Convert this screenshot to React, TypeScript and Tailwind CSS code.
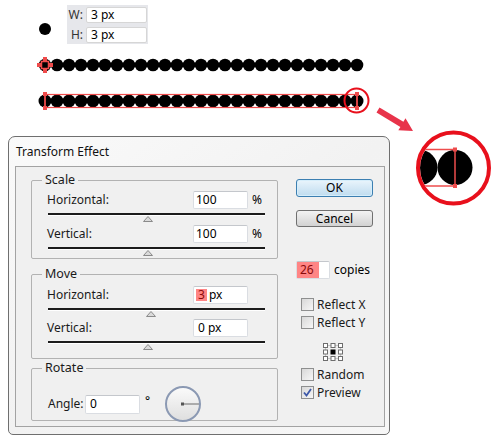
import type React from "react"

const DOTS = Array.from({ length: 27 }, (_, i) => 45 + i * 12)

function SizeField({ label, value }: { label: string; value: string }) {
  return (
    <div className="flex items-center">
      <span className="w-[19px] pr-[3px] text-right text-[#333]">{label}</span>
      <div className="flex h-[16px] w-[61px] items-center rounded-[2px] border border-[#d6d6d6] bg-white pl-[4px]">
        {value}
      </div>
    </div>
  )
}

function DotRows() {
  return (
    <svg width="380" height="92" className="block">
      {DOTS.map((x) => (
        <circle key={"a" + x} cx={x} cy={21} r={6.3} fill="#000" />
      ))}
      {/* selection marker on first dot */}
      <rect x={41.5} y={17.5} width={7} height={7} fill="none" stroke="#ef4b4b" strokeWidth={1.5} />
      <rect x={37} y={19} width={4} height={4} fill="#ef4b4b" />
      <rect x={49} y={19} width={4} height={4} fill="#ef4b4b" />
      <rect x={43} y={13} width={4} height={4} fill="#ef4b4b" />
      <rect x={43} y={25} width={4} height={4} fill="#ef4b4b" />

      {DOTS.map((x) => (
        <circle key={"b" + x} cx={x} cy={57} r={6.5} fill="#000" />
      ))}
      <rect x={45} y={50.5} width={312} height={13} fill="none" stroke="#ef4b4b" strokeWidth={1.2} />
      <line x1={45} y1={50} x2={45} y2={64} stroke="#ef4b4b" strokeWidth={1.5} />
      <line x1={357} y1={50} x2={357} y2={64} stroke="#ef4b4b" strokeWidth={1.5} />
      <rect x={43} y={48} width={4} height={4} fill="#ef4b4b" />
      <rect x={43} y={62} width={4} height={4} fill="#ef4b4b" />
      <rect x={355} y={48} width={4} height={4} fill="#ef4b4b" />
      <rect x={355} y={62} width={4} height={4} fill="#ef4b4b" />
      <circle cx={356.5} cy={56.5} r={12} fill="none" stroke="#e8101c" strokeWidth={2} />
    </svg>
  )
}

function Callout() {
  return (
    <svg width="130" height="115" className="absolute left-[370px] top-[100px]">
      <defs>
        <clipPath id="inside">
          <circle cx={83.5} cy={68} r={33.5} />
        </clipPath>
      </defs>
      <polygon
        points="9.5,7.4 33.4,21.7 35.5,18.3 43,31 28.3,30.3 30.4,26.9 6.5,12.6"
        fill="#e8334a"
      />
      <g clipPath="url(#inside)">
        <circle cx={50} cy={67.5} r={17.5} fill="#000" />
        <circle cx={85} cy={67.5} r={17.5} fill="#000" />
        <line x1={40} y1={49.5} x2={85} y2={49.5} stroke="#ee4d4d" strokeWidth={1.3} />
        <line x1={40} y1={86} x2={85} y2={86} stroke="#ee4d4d" strokeWidth={1.3} />
      </g>
      <line x1={85} y1={49.5} x2={85} y2={86} stroke="#ee4d4d" strokeWidth={1.5} />
      <rect x={83} y={47.5} width={4} height={4} fill="#ee4d4d" />
      <rect x={83} y={84} width={4} height={4} fill="#ee4d4d" />
      <circle cx={83.5} cy={68} r={35.5} fill="none" stroke="#e8101c" strokeWidth={4} />
    </svg>
  )
}

function TextBox({ className, children }: { className: string; children: React.ReactNode }) {
  return (
    <div
      className={
        "flex items-center rounded-[2px] border border-[#dadde2] border-t-[#c4c7cc] bg-white " + className
      }
    >
      {children}
    </div>
  )
}

function ValueRow({ label, children, unit }: { label: string; children: React.ReactNode; unit?: string }) {
  return (
    <div className="flex h-[18px] items-center">
      <span className="w-[161px] pl-[15px] text-[#1a1a1a]">{label}</span>
      <TextBox className="h-[18px] w-[55px] pl-[2px]">{children}</TextBox>
      {unit && <span className="ml-[4px]">{unit}</span>}
    </div>
  )
}

function Slider({ thumb, gap }: { thumb: number; gap: string }) {
  return (
    <div className={"ml-[16px] w-[217px] pt-[4px] " + gap}>
      <div className="h-[2px] bg-[#1c1c1c] shadow-[0_1px_0_#ffffff]" />
      <svg width="10" height="6" className="mt-[1px] block" style={{ marginLeft: thumb - 5 }}>
        <polygon points="5,0.5 9.5,5.5 0.5,5.5" fill="#dadada" stroke="#8a8a8a" strokeWidth={1} />
      </svg>
    </div>
  )
}

function Group({ title, className, children }: { title: string; className: string; children: React.ReactNode }) {
  return (
    <fieldset className={"w-[247px] rounded-[2px] border border-[#b2b2b2] " + className}>
      <legend className="ml-[10px] px-[3px] text-[12.5px] leading-[16px] text-[#1a1a1a]">{title}</legend>
      {children}
    </fieldset>
  )
}

function Checkbox({ label, checked }: { label: string; checked?: boolean }) {
  return (
    <div className="flex items-center pl-[5px]">
      <div className="flex h-[13px] w-[13px] items-center justify-center border border-[#8e8f8f] bg-gradient-to-br from-[#d8d8d8] to-[#f7f7f7]">
        {checked && (
          <svg width="11" height="11">
            <path d="M2 5.5 L4.5 8.5 L9 2" fill="none" stroke="#3d58a8" strokeWidth={1.8} />
          </svg>
        )}
      </div>
      <span className="ml-[3px] leading-[13px] text-[#1a1a1a]">{label}</span>
    </div>
  )
}

function RefPoint() {
  const pts = [
    [0.5, 0.5],
    [8, 0.5],
    [15.5, 0.5],
    [0.5, 7],
    [15.5, 7],
    [0.5, 13.5],
    [8, 13.5],
    [15.5, 13.5],
  ]
  return (
    <svg width="20" height="18" className="ml-[27px] block">
      <rect x={2.5} y={2.5} width={15} height={13} fill="none" stroke="#9a9a9a" strokeWidth={1} strokeDasharray="1 1" />
      {pts.map(([x, y]) => (
        <rect key={x + "-" + y} x={x} y={y} width={4} height={4} fill="#fff" stroke="#6d6d6d" strokeWidth={1} />
      ))}
      <rect x={7.5} y={6.5} width={5} height={5} fill="#000" />
    </svg>
  )
}

function Dial() {
  return (
    <svg width="38" height="38" className="ml-[14px] block">
      <defs>
        <linearGradient id="dialFill" x1="0" y1="0" x2="0" y2="1">
          <stop offset="0" stopColor="#fbfbfb" />
          <stop offset="1" stopColor="#dedede" />
        </linearGradient>
      </defs>
      <circle cx={19} cy={19} r={17} fill="url(#dialFill)" stroke="#8b99b3" strokeWidth={2} />
      <line x1={19} y1={19} x2={35} y2={19} stroke="#6b6b6b" strokeWidth={1} />
      <rect x={17} y={17.5} width={3} height={3} fill="#555" />
    </svg>
  )
}

function Dialog() {
  return (
    <div className="ml-[8px] h-[299px] w-[382px] rounded-t-[7px] rounded-b-[5px] border border-[#6f6f6f] bg-gradient-to-br from-[#fafafa] via-[#f2f2f2] to-[#f7f7f7]">
      <div className="h-[29px] pl-[7px] leading-[29px] text-[#111]">Transform Effect</div>
      <div className="ml-[6px] flex h-[261px] w-[370px] border border-[#a3a3a3] bg-[#f0f0f0]">
        <div className="pl-[15px] pt-[5px]">
          <Group title="Scale" className="h-[87px]">
            <div className="mt-[3px]">
              <ValueRow label="Horizontal:" unit="%">100</ValueRow>
              <Slider thumb={100} gap="pb-[3px]" />
              <ValueRow label="Vertical:" unit="%">100</ValueRow>
              <Slider thumb={100} gap="" />
            </div>
          </Group>
          <Group title="Move" className="mt-[7px] h-[93px]">
            <div className="mt-[4px]">
              <ValueRow label="Horizontal:">
                <span className="bg-[#ff8585] px-[2px] text-[#8a0a0a]">3</span>
                <span className="ml-[2px]">px</span>
              </ValueRow>
              <Slider thumb={103} gap="pb-[2px]" />
              <ValueRow label="Vertical:">
                <span className="pl-[2px]">0 px</span>
              </ValueRow>
              <Slider thumb={100} gap="" />
            </div>
          </Group>
          <Group title="Rotate" className="mt-[1px] h-[61px]">
            <div className="mt-[9px] flex items-center pl-[16px]">
              <span className="w-[37px] text-[#1a1a1a]">Angle:</span>
              <TextBox className="h-[19px] w-[55px] pl-[4px]">0</TextBox>
              <span className="ml-[5px] -mt-[6px]">°</span>
              <Dial />
            </div>
          </Group>
        </div>
        <div className="ml-[18px] flex w-[78px] flex-col pt-[12px]">
          <div className="flex h-[18px] w-[77px] items-center justify-center rounded-[3px] border border-[#3c7fb1] bg-gradient-to-b from-[#eaf5fc] to-[#bfdcef] shadow-[inset_0_0_0_1px_#d6eefb]">
            OK
          </div>
          <div className="mt-[13px] flex h-[17px] w-[77px] items-center justify-center rounded-[3px] border border-[#707070] bg-gradient-to-b from-[#f3f3f3] to-[#d2d2d2]">
            Cancel
          </div>
          <div className="mt-[34px] flex items-center">
            <TextBox className="h-[18px] w-[34px]">
              <span className="flex h-[16px] w-[22px] items-center bg-[#ff8585] pl-[3px] text-[#8a0a0a]">26</span>
            </TextBox>
            <span className="ml-[4px]">copies</span>
          </div>
          <div className="mt-[19px] flex flex-col gap-[5px]">
            <Checkbox label="Reflect X" />
            <Checkbox label="Reflect Y" />
          </div>
          <div className="mt-[14px]">
            <RefPoint />
          </div>
          <div className="mt-[7px] flex flex-col gap-[5px]">
            <Checkbox label="Random" />
            <Checkbox label="Preview" checked />
          </div>
        </div>
      </div>
    </div>
  )
}

export default function App() {
  return (
    <div className="relative h-[440px] w-[500px] overflow-hidden bg-white font-['Noto_Sans',sans-serif] text-[12px] leading-none text-black">
      <div className="flex h-[44px] items-start pl-[39px] pt-[5px]">
        <div className="mt-[18px] h-[12px] w-[12px] rounded-full bg-black" />
        <div className="ml-[16px] flex h-[39px] w-[81px] flex-col gap-[4px] bg-[#e6e7eb] pt-[2px]">
          <SizeField label="W:" value="3 px" />
          <SizeField label="H:" value="3 px" />
        </div>
      </div>
      <DotRows />
      <Dialog />
      <Callout />
    </div>
  )
}
